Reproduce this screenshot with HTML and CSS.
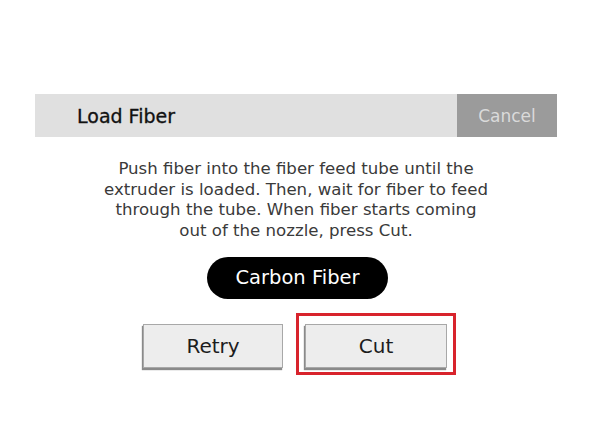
FILE: index.html
```html
<!DOCTYPE html>
<html lang="en">
<head>
    <meta charset="UTF-8">
    <meta name="viewport" content="width=device-width, initial-scale=1.0">
    <title>Load Fiber</title>
    <link rel="stylesheet" href="styles.css">
</head>
<body>
    <div class="dialog">
        <div class="header">
            <div class="title">Load Fiber</div>
            <div class="cancel">Cancel</div>
        </div>
        <p class="message">
            Push fiber into the fiber feed tube until the<br>
            extruder is loaded. Then, wait for fiber to feed<br>
            through the tube. When fiber starts coming<br>
            out of the nozzle, press Cut.
        </p>
        <div class="material">
            <div class="pill">Carbon Fiber</div>
        </div>
        <div class="actions">
            <div class="btn retry">Retry</div>
            <div class="highlight">
                <div class="btn">Cut</div>
            </div>
        </div>
    </div>
</body>
</html>
```

FILE: styles.css
```css
* {
    box-sizing: border-box;
    margin: 0;
    padding: 0;
}

body {
    font-family: "DejaVu Sans", Verdana, sans-serif;
    background-color: #fff;
    width: 592px;
    height: 444px;
    overflow: hidden;
}

.dialog {
    width: 522px;
    margin: 94px 0 0 35px;
}

.header {
    display: flex;
    height: 43px;
    background-color: #e0e0e0;
}

.title {
    flex-grow: 1;
    padding-left: 42px;
    display: flex;
    align-items: center;
    font-size: 19px;
    color: #111;
    -webkit-text-stroke: 0.3px #111;
}

.cancel {
    width: 100px;
    background-color: #9b9b9b;
    color: #dadada;
    font-size: 17px;
    display: flex;
    align-items: center;
    justify-content: center;
}

.message {
    margin-top: 22px;
    text-align: center;
    font-size: 16.6px;
    line-height: 20.7px;
    color: #3a3a3a;
}

.material {
    display: flex;
    justify-content: center;
    margin-top: 15px;
    padding-left: 3px;
}

.pill {
    width: 181px;
    height: 42px;
    border-radius: 21px;
    background-color: #000;
    color: #fff;
    font-size: 19.5px;
    display: flex;
    align-items: center;
    justify-content: center;
}

.actions {
    display: flex;
    justify-content: center;
    align-items: flex-start;
    gap: 13px;
    margin-top: 14px;
    padding-left: 7px;
}

.btn {
    width: 142px;
    height: 44px;
    background-color: #ededed;
    border: 1px solid #a8a8a8;
    box-shadow: -1px 2px 1px #8a8a8a;
    font-size: 20px;
    color: #1c1c1c;
    display: flex;
    align-items: center;
    justify-content: center;
}

.retry {
    width: 140px;
    margin-top: 11px;
}

.highlight {
    border: 3px solid #d8232c;
    padding: 8px 6px 4px 6px;
}
```
